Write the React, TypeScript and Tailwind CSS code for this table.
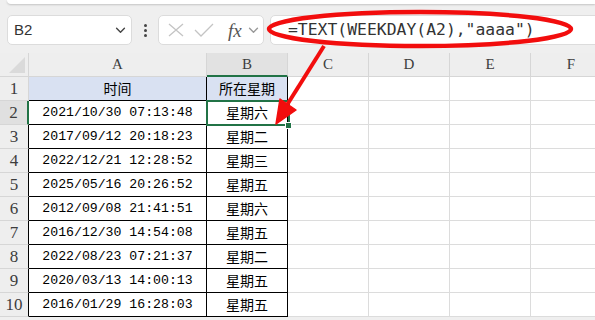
import React from "react";

const rows: [string, string][] = [
  ["2021/10/30 07:13:48", "星期六"],
  ["2017/09/12 20:18:23", "星期二"],
  ["2022/12/21 12:28:52", "星期三"],
  ["2025/05/16 20:26:52", "星期五"],
  ["2012/09/08 21:41:51", "星期六"],
  ["2016/12/30 14:54:08", "星期五"],
  ["2022/08/23 07:21:37", "星期二"],
  ["2020/03/13 14:00:13", "星期五"],
  ["2016/01/29 16:28:03", "星期五"],
];

const serif = { fontFamily: '"Liberation Serif", "DejaVu Serif", serif' };
const mono = { fontFamily: '"Liberation Mono", "Noto Sans CJK SC", monospace' };
const cjk = { fontFamily: '"Noto Sans CJK SC", "Noto Sans", sans-serif' };

function Chevron({ className }: { className?: string }) {
  return (
    <svg viewBox="0 0 12 8" className={className} fill="none" stroke="currentColor" strokeWidth="1.6" strokeLinecap="round" strokeLinejoin="round">
      <path d="M1.5 1.5 L6 6 L10.5 1.5" />
    </svg>
  );
}

export default function App() {
  const emptyCols = ["C", "D", "E", "F"];
  return (
    <div className="relative w-[595px] h-[320px] overflow-hidden bg-[#efefef]">
      {/* top white panel */}
      <div className="h-[4px] ml-[7px] bg-white rounded-bl-[6px] shadow-[0_1px_2px_rgba(0,0,0,0.18)]" />

      {/* formula bar */}
      <div className="mt-[11px] h-[30px] flex items-stretch">
        <div className="ml-[7px] w-[125px] shrink-0 bg-white border border-[#dcdcdc] rounded-[5px] flex items-center justify-between pl-[6px] pr-[5px]">
          <span className="text-[15px] text-[#333]" style={{ fontFamily: '"Liberation Sans", Arial, sans-serif' }}>B2</span>
          <Chevron className="w-[11px] h-[7px] text-[#444]" />
        </div>
        <div className="w-[26px] shrink-0 flex flex-col items-center justify-center gap-[2px]">
          <div className="w-[3px] h-[3px] rounded-full bg-[#444]" />
          <div className="w-[3px] h-[3px] rounded-full bg-[#444]" />
          <div className="w-[3px] h-[3px] rounded-full bg-[#444]" />
        </div>
        <div className="w-[106px] shrink-0 bg-white border border-[#dcdcdc] rounded-[5px] flex items-center pl-[8px]">
          <svg viewBox="0 0 18 14" className="w-[18px] h-[14px] text-[#c4c4c4]" fill="none" stroke="currentColor" strokeWidth="1.3">
            <path d="M2 1 L16 13 M16 1 L2 13" />
          </svg>
          <svg viewBox="0 0 20 14" className="ml-[9px] w-[20px] h-[14px] text-[#c4c4c4]" fill="none" stroke="currentColor" strokeWidth="1.3">
            <path d="M1 7 L7 13 L19 1" />
          </svg>
          <span className="ml-[14px] text-[19px] italic text-[#555] leading-none" style={serif}>fx</span>
          <Chevron className="ml-[6px] w-[11px] h-[7px] text-[#999]" />
        </div>
        <div className="ml-[6px] flex-1 -mr-[10px] bg-white border border-[#dcdcdc] rounded-[5px] flex items-center pl-[17px]">
          <span className="text-[16.4px] text-[#333] leading-none whitespace-nowrap" style={{ fontFamily: '"DejaVu Sans Mono", "Liberation Mono", monospace' }}>
            =TEXT(WEEKDAY(A2),"aaaa")
          </span>
        </div>
      </div>

      {/* sheet */}
      <div className="mt-[8px] grid grid-cols-[29px_178px_81px_81px_81px_81px_81px] grid-rows-[24px_repeat(10,24px)] w-[612px] bg-white">
        {/* header row */}
        <div className="relative bg-[#eeeeee] border-r border-b border-[#d6d6d6]">
          <div className="absolute right-[3px] bottom-[3px] w-0 h-0 border-l-[16px] border-l-transparent border-b-[16px] border-b-[#dadada]" />
        </div>
        <div className="bg-[#eeeeee] border-r border-b border-[#d6d6d6] flex items-center justify-center text-[15px] text-[#3d3d3d]" style={serif}>A</div>
        <div className="bg-[#e2e2e2] border-r border-[#d6d6d6] border-b-2 border-b-[#217346] flex items-center justify-center text-[15px] text-[#3d3d3d]" style={serif}>B</div>
        {emptyCols.map((c) => (
          <div key={c} className="bg-[#eeeeee] border-r border-b border-[#d6d6d6] flex items-center justify-center text-[15px] text-[#3d3d3d]" style={serif}>{c}</div>
        ))}

        {/* row 1 */}
        <div className="bg-[#eeeeee] border-r border-b border-[#d6d6d6] flex items-center justify-center text-[17px] text-[#3d3d3d]" style={serif}>1</div>
        <div className="bg-[#d9e1f2] border-r border-b border-black flex items-center justify-center text-[14px] text-black whitespace-nowrap" style={cjk}>时间</div>
        <div className="bg-[#d9e1f2] border-r border-b border-black flex items-center justify-center text-[14px] text-black whitespace-nowrap" style={cjk}>所在星期</div>
        {emptyCols.map((c) => (
          <div key={c} className="border-r border-b border-[#dcdcdc]" />
        ))}

        {rows.map(([t, w], i) => {
          const n = i + 2;
          const sel = n === 2;
          return (
            <React.Fragment key={n}>
              <div
                className={
                  sel
                    ? "bg-[#e0e0e0] border-b border-[#d6d6d6] border-r-2 border-r-[#217346] flex items-center justify-center text-[17px] text-[#3d3d3d]"
                    : "bg-[#eeeeee] border-b border-[#d6d6d6] border-r border-r-black flex items-center justify-center text-[17px] text-[#3d3d3d]"
                }
                style={serif}
              >
                {n}
              </div>
              <div className="border-r border-b border-black flex items-center justify-center text-[13.2px] text-black whitespace-nowrap" style={mono}>{t}</div>
              <div className="border-r border-b border-black flex items-center justify-center text-[14px] text-black whitespace-nowrap" style={cjk}>{w}</div>
              {emptyCols.map((c) => (
                <div key={c} className="border-r border-b border-[#dcdcdc]" />
              ))}
            </React.Fragment>
          );
        })}
      </div>

      {/* selection box B2 */}
      <div className="absolute left-[206px] top-[100px] w-[84px] h-[26px] border-2 border-[#217346] pointer-events-none" />
      <div className="absolute left-[285px] top-[122px] w-[7px] h-[7px] bg-[#217346] border border-white pointer-events-none" />

      {/* red annotation */}
      <svg className="absolute left-0 top-0 pointer-events-none" width="595" height="320" viewBox="0 0 595 320">
        <ellipse cx="420" cy="29" rx="151" ry="17" fill="none" stroke="#f20d0d" strokeWidth="4.5" />
        <line x1="324" y1="46" x2="287" y2="105" stroke="#f20d0d" strokeWidth="4" />
        <polygon points="276,124 280,99 296,110" fill="#f20d0d" stroke="#f20d0d" strokeWidth="1.5" strokeLinejoin="round" />
      </svg>
    </div>
  );
}
